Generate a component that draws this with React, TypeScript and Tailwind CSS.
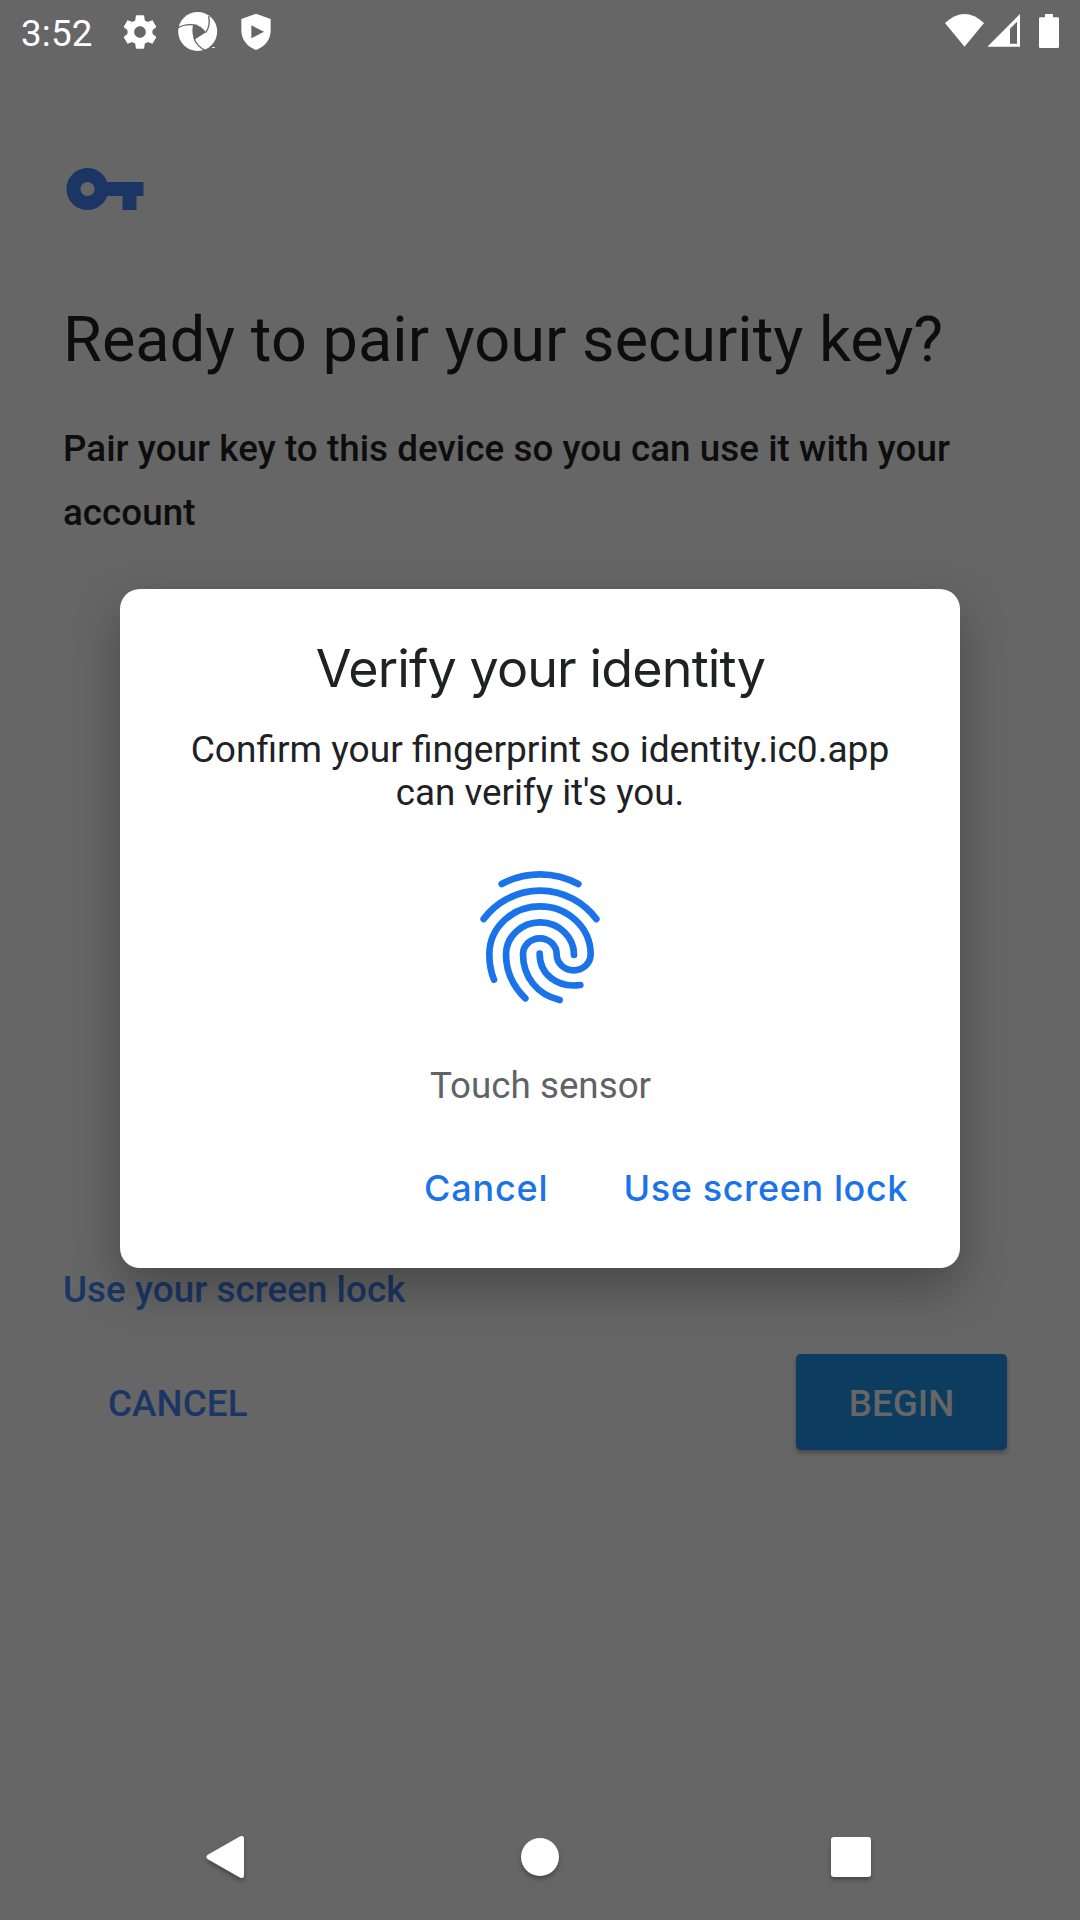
import React from "react";

const SETTINGS =
  "M19.43 12.98c.04-.32.07-.64.07-.98s-.03-.66-.07-.98l2.11-1.65c.19-.15.24-.42.12-.64l-2-3.46c-.12-.22-.39-.3-.61-.22l-2.49 1c-.52-.4-1.08-.73-1.69-.98l-.38-2.65C14.46 2.18 14.25 2 14 2h-4c-.25 0-.46.18-.49.42l-.38 2.65c-.61.25-1.17.59-1.69.98l-2.49-1c-.23-.09-.49 0-.61.22l-2 3.46c-.13.22-.07.49.12.64l2.11 1.65c-.04.32-.07.65-.07.98s.03.66.07.98l-2.11 1.65c-.19.15-.24.42-.12.64l2 3.46c.12.22.39.3.61.22l2.49-1c.52.4 1.08.73 1.69.98l.38 2.65c.03.24.24.42.49.42h4c.25 0 .46-.18.49-.42l.38-2.65c.61-.25 1.17-.59 1.69-.98l2.49 1c.23.09.49 0 .61-.22l2-3.46c.12-.22.07-.49-.12-.64l-2.11-1.65zM12 15.5c-1.93 0-3.5-1.57-3.5-3.5s1.57-3.5 3.5-3.5 3.5 1.57 3.5 3.5-1.57 3.5-3.5 3.5z";

function StatusBar() {
  return (
    <header className="flex h-[63px] items-start text-white">
      <span className="ml-[21px] mt-[12px] w-[99px] text-[36.75px] leading-[44px] tracking-[0.2px]">3:52</span>
      <svg className="mt-3 size-10" viewBox="0 0 24 24" fill="currentColor">
        <path d={SETTINGS} />
      </svg>
      <svg className="ml-[17px] mt-[11px] h-[42px] w-[42px]" viewBox="531 33 126 126">
        <circle cx="593" cy="94.500" r="58.500" fill="#fff" />
        <path d="M579 74Q604 75 618 97L583 119Q574 98 579 74Z" fill="#666" />
        <path
          d="M533 84Q556 69 592 76M617 98Q632 78 626 48M581 112Q590 140 618 152"
          fill="none"
          stroke="#666"
          strokeWidth="4"
        />
        <path d="M636 142.500h9" stroke="#fff" strokeWidth="2.500" />
      </svg>
      <svg className="ml-[19px] mt-[11px] h-[42px] w-[36px]" viewBox="714 33 108 126">
        <path d="M768 41L812 57V91C812 118 795 141 768 150C741 141 724 118 724 91V57Z" fill="#fff" />
        <path d="M754 76L792 95.500L754 115Z" fill="#666" />
      </svg>
      <svg className="ml-auto mr-[15px] mt-[11px] h-[42px] w-[125px]" viewBox="60 33 375 126" fill="#fff">
        <path d="M133.500 140L75 69Q133.500 15 192 69Z" />
        <path fillRule="evenodd" d="M202 140L300 42V140ZM270 86V131H291V65Z" />
        <path d="M361 52H375V42H399V52H413Q417 52 417 56V140Q417 144 413 144H361Q357 144 357 140V56Q357 52 361 52Z" />
      </svg>
    </header>
  );
}

function PairingPage() {
  return (
    <main className="flex flex-1 flex-col px-[63px] text-[#0d0d0d]">
      <svg className="mt-[84px] size-[84px]" viewBox="0 0 24 24" fill="#1b3665">
        <path d="M12.650 10C11.830 7.670 9.610 6 7 6c-3.310 0-6 2.690-6 6s2.690 6 6 6c2.610 0 4.830-1.670 5.650-4H17v4h4v-4h2v-4H12.650zM7 14c-1.100 0-2-.9-2-2s.9-2 2-2 2 .9 2 2-.9 2-2 2z" />
      </svg>
      <h1 className="mt-[72px] whitespace-nowrap text-[63px] leading-[74px] tracking-[0.06px]">
        Ready to pair your security key?
      </h1>
      <p className="mt-[40px] whitespace-nowrap text-[36.75px] font-medium leading-[64px] tracking-[0.06px]">
        Pair your key to this device so you can use it with your
        <br />
        account
      </p>
      <a className="mt-[723px] text-[36.75px] font-medium leading-[44px] tracking-[0.06px] text-[#1b3665]">
        Use your screen lock
      </a>
      <div className="mt-[42px] flex h-24 justify-between pr-[10px] text-[36.75px] font-medium">
        <button className="w-[230px] pl-[45px] pt-[3px] text-left tracking-[0.1px] text-[#1b3665]">CANCEL</button>
        <button className="w-[211px] rounded-[5px] bg-[#0c3c60] pt-[3px] text-[#666666] shadow-[0_3px_5px_rgba(0,0,0,0.3)]">
          BEGIN
        </button>
      </div>
    </main>
  );
}

function NavigationBar() {
  return (
    <nav className="flex h-[126px] items-center justify-center gap-[231px]">
      <svg className="size-20 drop-shadow-[0_3px_2px_rgba(0,0,0,0.3)]" viewBox="0 0 80 80">
        <path d="M20 40L52.500 21.500V58.500Z" fill="#fff" stroke="#fff" strokeWidth="5" strokeLinejoin="round" />
      </svg>
      <svg className="size-20 drop-shadow-[0_3px_2px_rgba(0,0,0,0.3)]" viewBox="0 0 80 80">
        <circle cx="40" cy="40" r="19" fill="#fff" />
      </svg>
      <svg className="size-20 drop-shadow-[0_3px_2px_rgba(0,0,0,0.3)]" viewBox="0 0 80 80">
        <rect x="20" y="20" width="40" height="40" rx="3" fill="#fff" />
      </svg>
    </nav>
  );
}

function Fingerprint() {
  return (
    <svg
      className="mt-9 h-[170px] w-40"
      viewBox="0 0 480 510"
      fill="none"
      stroke="#1a73e8"
      strokeWidth="20"
      strokeLinecap="round"
    >
      <path d="M125 102A242 242 0 0 1 355 102" />
      <path d="M71 207A210 210 0 0 1 409 207" />
      <path d="M102 389C92 365 88 340 88 313A152 144 0 0 1 392 313A51 48 0 0 1 290 313A50.500 48 0 0 0 189 313C189 380 231 434 299 450" />
      <path d="M196 445C158 408 138 362 138 313A102 97 0 0 1 342 315" />
      <path d="M239 311C239 372 290 415 361 405" />
    </svg>
  );
}

function VerifyDialog() {
  return (
    <div className="absolute inset-0 flex items-start justify-center pt-[589px]">
      <section
        role="dialog"
        className="flex h-[679px] w-[840px] flex-col items-center rounded-[20px] bg-white shadow-[0_20px_50px_rgba(0,0,0,0.3)]"
      >
        <h2 className="mt-[47px] whitespace-nowrap pl-px font-[Inter] text-[52px] font-normal leading-[66px] tracking-[-0.85px] text-[#202124]">
          Verify your identity
        </h2>
        <p className="mt-[26px] whitespace-nowrap text-center text-[37.1px] leading-[43px] text-[#202124]">
          Confirm your fingerprint so identity.ic0.app
          <br />
          <span className="text-[36.75px]">can verify it's you.</span>
        </p>
        <Fingerprint />
        <p className="mt-[44px] pl-px text-[36.75px] leading-[44px] text-[#5f6368]">Touch sensor</p>
        <div className="mt-[58px] flex w-full justify-end gap-[75px] pr-[52px] font-[Inter] text-[36px] font-medium leading-[44px] text-[#1a73e8]">
          <button className="tracking-[0.85px]">Cancel</button>
          <button className="tracking-[0.6px]">Use screen lock</button>
        </div>
      </section>
    </div>
  );
}

export default function App() {
  return (
    <div className="relative flex h-[1920px] w-[1080px] flex-col overflow-hidden bg-[#666666] font-[Roboto]">
      <StatusBar />
      <PairingPage />
      <NavigationBar />
      <VerifyDialog />
    </div>
  );
}
